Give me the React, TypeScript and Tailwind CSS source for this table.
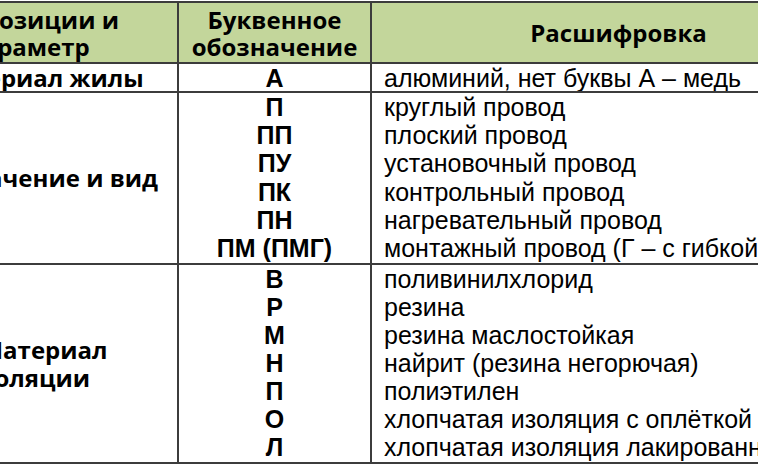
type Title = { text: string; shift: string };

const sections: { title: Title[]; rows: string[][]; height: string }[] = [
  {
    title: [{ text: 'Материал жилы', shift: 'pr-[4px]' }],
    rows: [['А', 'алюминий, нет буквы А – медь']],
    height: 'h-[29px]',
  },
  {
    title: [{ text: 'Назначение и вид', shift: '' }],
    rows: [
      ['П', 'круглый провод'],
      ['ПП', 'плоский провод'],
      ['ПУ', 'установочный провод'],
      ['ПК', 'контрольный провод'],
      ['ПН', 'нагревательный провод'],
      ['ПМ (ПМГ)', 'монтажный провод (Г – с гибкой жилой)'],
    ],
    height: 'h-[172px]',
  },
  {
    title: [
      { text: 'Материал', shift: 'pl-[4px]' },
      { text: 'изоляции', shift: 'pr-[30px]' },
    ],
    rows: [
      ['В', 'поливинилхлорид'],
      ['Р', 'резина'],
      ['М', 'резина маслостойкая'],
      ['Н', 'найрит (резина негорючая)'],
      ['П', 'полиэтилен'],
      ['О', 'хлопчатая изоляция с оплёткой'],
      ['Л', 'хлопчатая изоляция лакированная'],
    ],
    height: 'h-[199px]',
  },
];

const bold = "font-['Open_Sans',sans-serif] font-bold text-[24px] text-black";
const arial = "font-['Liberation_Sans',Arial,sans-serif] text-black leading-none";

export default function App() {
  return (
    <div className="h-[467px] w-[758px] overflow-hidden bg-white">
      <div className="ml-[-53px] mt-px w-[920px] border-t-2 border-[#3c3c3c]">
        <div className="grid h-[59px] grid-cols-[230px_193px_1fr] bg-[#c3d69b] leading-[27px]">
          <div className={`${bold} flex flex-col justify-center whitespace-nowrap pl-[34px]`}>
            <span>Позиции и</span>
            <span className="ml-[-14px]">параметр</span>
          </div>
          <div className={`${bold} flex flex-col items-center justify-center border-l-2 border-[#3c3c3c]`}>
            <span>Буквенное</span>
            <span>обозначение</span>
          </div>
          <div className={`${bold} flex items-center justify-center border-l-2 border-[#3c3c3c] pr-[2px]`}>
            Расшифровка
          </div>
        </div>
        {sections.map((section) => (
          <div
            key={section.title[0].text}
            className={`grid grid-cols-[230px_193px_1fr] overflow-hidden border-t-2 border-[#3c3c3c] ${section.height}`}
          >
            <div className={`${bold} flex flex-col items-center justify-center whitespace-nowrap pr-[40px] leading-[28px]`}>
              {section.title.map((line) => (
                <span key={line.text} className={line.shift}>
                  {line.text}
                </span>
              ))}
            </div>
            <div className="flex flex-col border-l-2 border-[#3c3c3c]">
              {section.rows.map(([code]) => (
                <div
                  key={code + section.title[0].text}
                  className={`${arial} flex min-h-0 flex-1 items-center justify-center text-[25px] font-bold`}
                >
                  {code}
                </div>
              ))}
            </div>
            <div className="flex flex-col border-l-2 border-[#3c3c3c]">
              {section.rows.map(([code, text]) => (
                <div
                  key={code + text}
                  className={`${arial} flex min-h-0 flex-1 items-center whitespace-nowrap pl-[12px] text-[25px]`}
                >
                  {text}
                </div>
              ))}
            </div>
          </div>
        ))}
        <div className="border-t-2 border-[#3c3c3c]" />
      </div>
    </div>
  );
}
